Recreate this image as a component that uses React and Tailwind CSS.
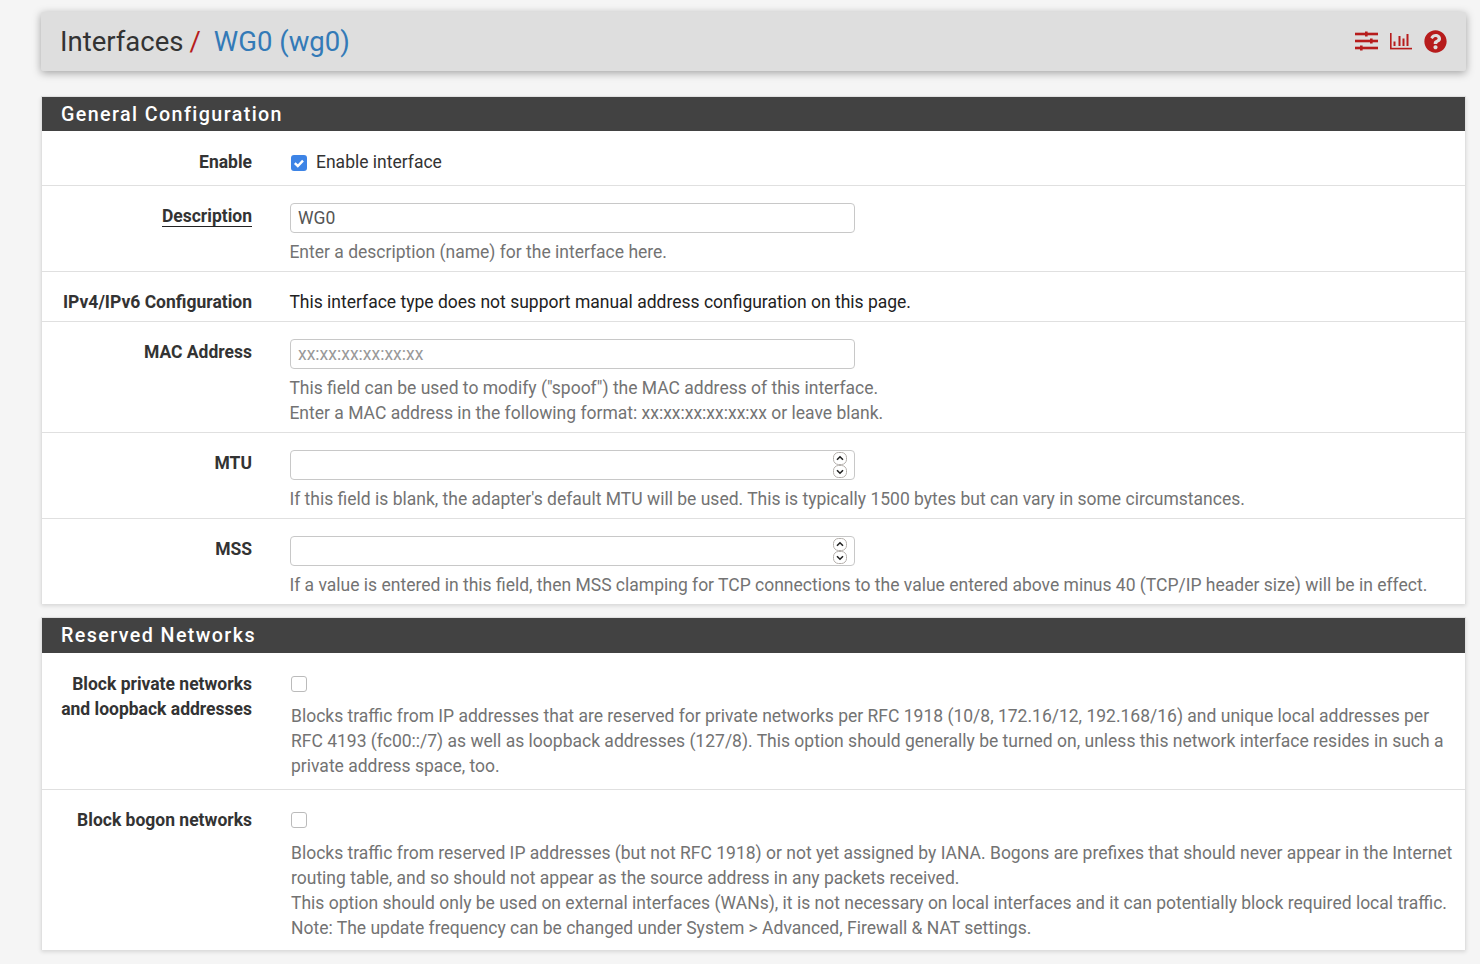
import React from 'react';
import { FaQuestionCircle } from 'react-icons/fa';

function Row({ label, underline, top = 'pt-[18px]', className = '', children }) {
    return (
        <div className={`flex border-b border-[#e0e0e0] last:border-b-0 ${className}`}>
            <div className={`w-[210px] shrink-0 text-right font-bold text-[#333] leading-[25px] ${top}`}>
                {underline ? <span className="border-b border-[#222]">{label}</span> : label}
            </div>
            <div className="ml-[38px] flex-1 min-w-0">{children}</div>
        </div>
    );
}

function Help({ children, className = '' }) {
    return <div className={`text-[#737373] leading-[25px] ${className}`}>{children}</div>;
}

function Spinner() {
    return (
        <div className="flex flex-col mr-[7px]">
            <svg width="14" height="13" viewBox="0 0 14 13" fill="none">
                <rect x="0.5" y="0.5" width="13" height="12" rx="5" stroke="#b5b0ac" />
                <path d="M4 7.8 7 4.8l3 3" stroke="#222" strokeWidth="1.6" />
            </svg>
            <svg width="14" height="13" viewBox="0 0 14 13" fill="none">
                <rect x="0.5" y="0.5" width="13" height="12" rx="5" stroke="#b5b0ac" />
                <path d="M4 5.2 7 8.2l3-3" stroke="#222" strokeWidth="1.6" />
            </svg>
        </div>
    );
}

function Field({ value, placeholder, spinner }) {
    return (
        <div className="flex items-center w-[565px] h-[30px] bg-white border border-[#c8c8c8] rounded-[4px]">
            <input
                readOnly
                value={value || ''}
                placeholder={placeholder}
                className="flex-1 min-w-0 px-[7px] text-[#555] text-[17.5px] outline-none bg-transparent placeholder:text-[#999]"
            />
            {spinner && <Spinner />}
        </div>
    );
}

function Box({ checked }) {
    if (checked) {
        return (
            <svg width="16" height="16" viewBox="0 0 16 16" className="shrink-0">
                <rect width="16" height="16" rx="3" fill="#3d84e6" />
                <path d="M3.8 8.2 6.8 11l5.2-5.4" stroke="#fff" strokeWidth="2.4" fill="none" />
            </svg>
        );
    }
    return <div className="w-[16px] h-[16px] shrink-0 bg-white border border-[#bbb] rounded-[3px]" />;
}

function Panel({ title, headClass, className = '', children }) {
    return (
        <section className={`bg-white border-x border-t border-[#e0e0e0] shadow-[0_2px_4px_rgba(0,0,0,0.12)] ${className}`}>
            <h2 className={`bg-[#424242] text-white text-[19.7px] font-medium tracking-[1.4px] pl-[19px] flex items-center ${headClass}`}>
                {title}
            </h2>
            {children}
        </section>
    );
}

function HeaderIcons() {
    return (
        <div className="flex items-center gap-[12px] text-[#b71c1c]">
            <svg width="23" height="21" viewBox="0 0 23 21" fill="#b71c1c">
                <rect x="0" y="1.7" width="23" height="2.6" />
                <rect x="10" y="0.5" width="2.6" height="5" />
                <rect x="0" y="8.7" width="23" height="2.6" />
                <rect x="15" y="7.5" width="2.6" height="5" />
                <rect x="0" y="15.7" width="23" height="2.6" />
                <rect x="5" y="14.5" width="2.6" height="5" />
            </svg>
            <svg width="22" height="21" viewBox="0 0 22 21" fill="#b71c1c">
                <rect x="0" y="2" width="1.6" height="16" />
                <rect x="0" y="16.8" width="22" height="1.6" />
                <rect x="3.5" y="10.5" width="2" height="4.5" />
                <rect x="8.5" y="5" width="2" height="10" />
                <rect x="12.5" y="7.5" width="2" height="7.5" />
                <rect x="16.5" y="3" width="2" height="12" />
            </svg>
            <FaQuestionCircle size={23} />
        </div>
    );
}

export default function App() {
    return (
        <div className="h-[964px] overflow-hidden bg-[#f5f5f5] pt-[12px] pl-[41px] pr-[14px] text-[17.5px] text-[#333] font-['Roboto',sans-serif]">
            <header className="flex items-center justify-between h-[59px] bg-[#dedede] rounded-[2px] pl-[19px] pr-[19px] shadow-[0_2px_8px_rgba(0,0,0,0.35)]">
                <h1 className="text-[27.5px] text-[#333]">
                    Interfaces<span className="text-[#b71c1c] ml-[6px]">/</span>
                    <span className="text-[#337ab7] ml-[13px]">WG0 (wg0)</span>
                </h1>
                <HeaderIcons />
            </header>

            <Panel title="General Configuration" headClass="h-[34px] pt-[2px]" className="mt-[25px]">
                <Row label="Enable" top="pt-[19px]" className="h-[55px]">
                    <div className="flex items-center gap-[9px] h-[25px] mt-[19px] ml-[1px] text-[#333]">
                        <Box checked />
                        <span>Enable interface</span>
                    </div>
                </Row>
                <Row label="Description" top="pt-[18px]" underline className="h-[86px]">
                    <div className="pt-[17px]">
                        <Field value="WG0" />
                        <Help className="mt-[7px] -ml-[0.6px]">Enter a description (name) for the interface here.</Help>
                    </div>
                </Row>
                <Row label="IPv4/IPv6 Configuration" className="h-[50px]">
                    <div className="pt-[18px] -ml-[0.6px] leading-[25px] text-[#222]">
                        This interface type does not support manual address configuration on this page.
                    </div>
                </Row>
                <Row label="MAC Address" top="pt-[18px]" className="h-[111px]">
                    <div className="pt-[17px]">
                        <Field placeholder="xx:xx:xx:xx:xx:xx" />
                        <Help className="mt-[7px] -ml-[0.6px]">
                            This field can be used to modify ("spoof") the MAC address of this interface.<br />
                            Enter a MAC address in the following format: xx:xx:xx:xx:xx:xx or leave blank.
                        </Help>
                    </div>
                </Row>
                <Row label="MTU" top="pt-[18px]" className="h-[86px]">
                    <div className="pt-[17px]">
                        <Field spinner />
                        <Help className="mt-[7px] -ml-[0.6px]">If this field is blank, the adapter's default MTU will be used. This is typically 1500 bytes but can vary in some circumstances.</Help>
                    </div>
                </Row>
                <Row label="MSS" top="pt-[18px]" className="h-[85px]">
                    <div className="pt-[17px]">
                        <Field spinner />
                        <Help className="mt-[7px] -ml-[0.6px]">If a value is entered in this field, then MSS clamping for TCP connections to the value entered above minus 40 (TCP/IP header size) will be in effect.</Help>
                    </div>
                </Row>
            </Panel>

            <Panel title="Reserved Networks" headClass="h-[35px]" className="mt-[13px]">
                <Row label={<>Block private networks<br />and loopback addresses</>} top="pt-[19px]" className="h-[137px]">
                    <div className="pt-[23px] pl-[1px] pr-[10px]">
                        <Box />
                        <Help className="mt-[12px]">
                            Blocks traffic from IP addresses that are reserved for private networks per RFC 1918 (10/8, 172.16/12, 192.168/16) and unique local addresses per RFC 4193 (fc00::/7) as well as loopback addresses (127/8). This option should generally be turned on, unless this network interface resides in such a private address space, too.
                        </Help>
                    </div>
                </Row>
                <Row label="Block bogon networks" className="h-[160px]">
                    <div className="pt-[22px] pl-[1px] pr-[10px]">
                        <Box />
                        <Help className="mt-[13px]">
                            Blocks traffic from reserved IP addresses (but not RFC 1918) or not yet assigned by IANA. Bogons are prefixes that should never appear in the Internet routing table, and so should not appear as the source address in any packets received.<br />
                            This option should only be used on external interfaces (WANs), it is not necessary on local interfaces and it can potentially block required local traffic.<br />
                            Note: The update frequency can be changed under System &gt; Advanced, Firewall &amp; NAT settings.
                        </Help>
                    </div>
                </Row>
            </Panel>
        </div>
    );
}
